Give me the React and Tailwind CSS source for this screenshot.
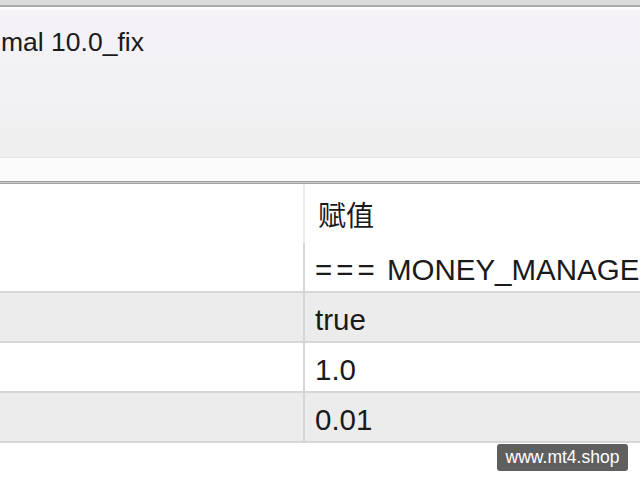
export default function App() {
  const font = { fontFamily: '"Liberation Sans", "Noto Sans CJK SC", Arial, sans-serif' }
  const rows = [
    { key: 'mm', value: <><span className="tracking-[4px]">===</span> MONEY_MANAGE</>, bg: 'bg-white' },
    { key: 'true', value: 'true', bg: 'bg-[#ececec]' },
    { key: 'one', value: '1.0', bg: 'bg-white' },
    { key: 'lot', value: '0.01', bg: 'bg-[#ececec]' },
  ]

  return (
    <div className="relative w-[640px] h-[480px] overflow-hidden bg-white text-[#1a1a1a]" style={font}>
      {/* window title area */}
      <div className="h-[5px] bg-[#dadada]" />
      <div className="h-[2px] bg-[#a9a9a9]" />
      <div className="h-[3px] bg-[#fbfbfb]" />
      <div className="h-[148px] bg-gradient-to-b from-[#f4f2f7] via-[#f2f1f4] to-[#efefef] border-b border-[#e2e2e2]">
        <div className="pl-[1px] pt-[15px] text-[26.5px] leading-[34px] whitespace-nowrap">mal 10.0_fix</div>
      </div>
      <div className="h-[23px] bg-[#fafafa]" />
      <div className="h-[1px] bg-[#9d9d9d]" />
      <div className="h-[1px] bg-[#c8c8c8]" />
      <div className="h-[1px] bg-[#a5a5a5]" />

      {/* parameter table */}
      <div className="flex h-[59px] bg-white">
        <div className="w-[305px] border-r-2 border-[#ececec]" />
        <div
          className="flex-1 pl-[13px] pt-[12px] text-[28px] leading-[36px] whitespace-nowrap"
          style={{ fontFamily: '"Noto Sans CJK SC", sans-serif' }}
        >
          赋值
        </div>
      </div>
      {rows.map((r) => (
        <div key={r.key} className={`flex h-[50px] border-b-2 border-[#d6d6d6] ${r.bg}`}>
          <div className="w-[305px] border-r-2 border-[#d6d6d6]" />
          <div className="flex-1 pl-[10px] pt-[6px] flex items-center text-[29.5px] whitespace-pre overflow-hidden">
            <span>{r.value}</span>
          </div>
        </div>
      ))}

      {/* watermark */}
      <div className="absolute left-[497px] top-[444px] w-[131px] h-[27px] rounded-[3px] bg-[#5f5f5f] text-white text-[17.5px] flex items-center justify-center">
        www.mt4.shop
      </div>
    </div>
  )
}
